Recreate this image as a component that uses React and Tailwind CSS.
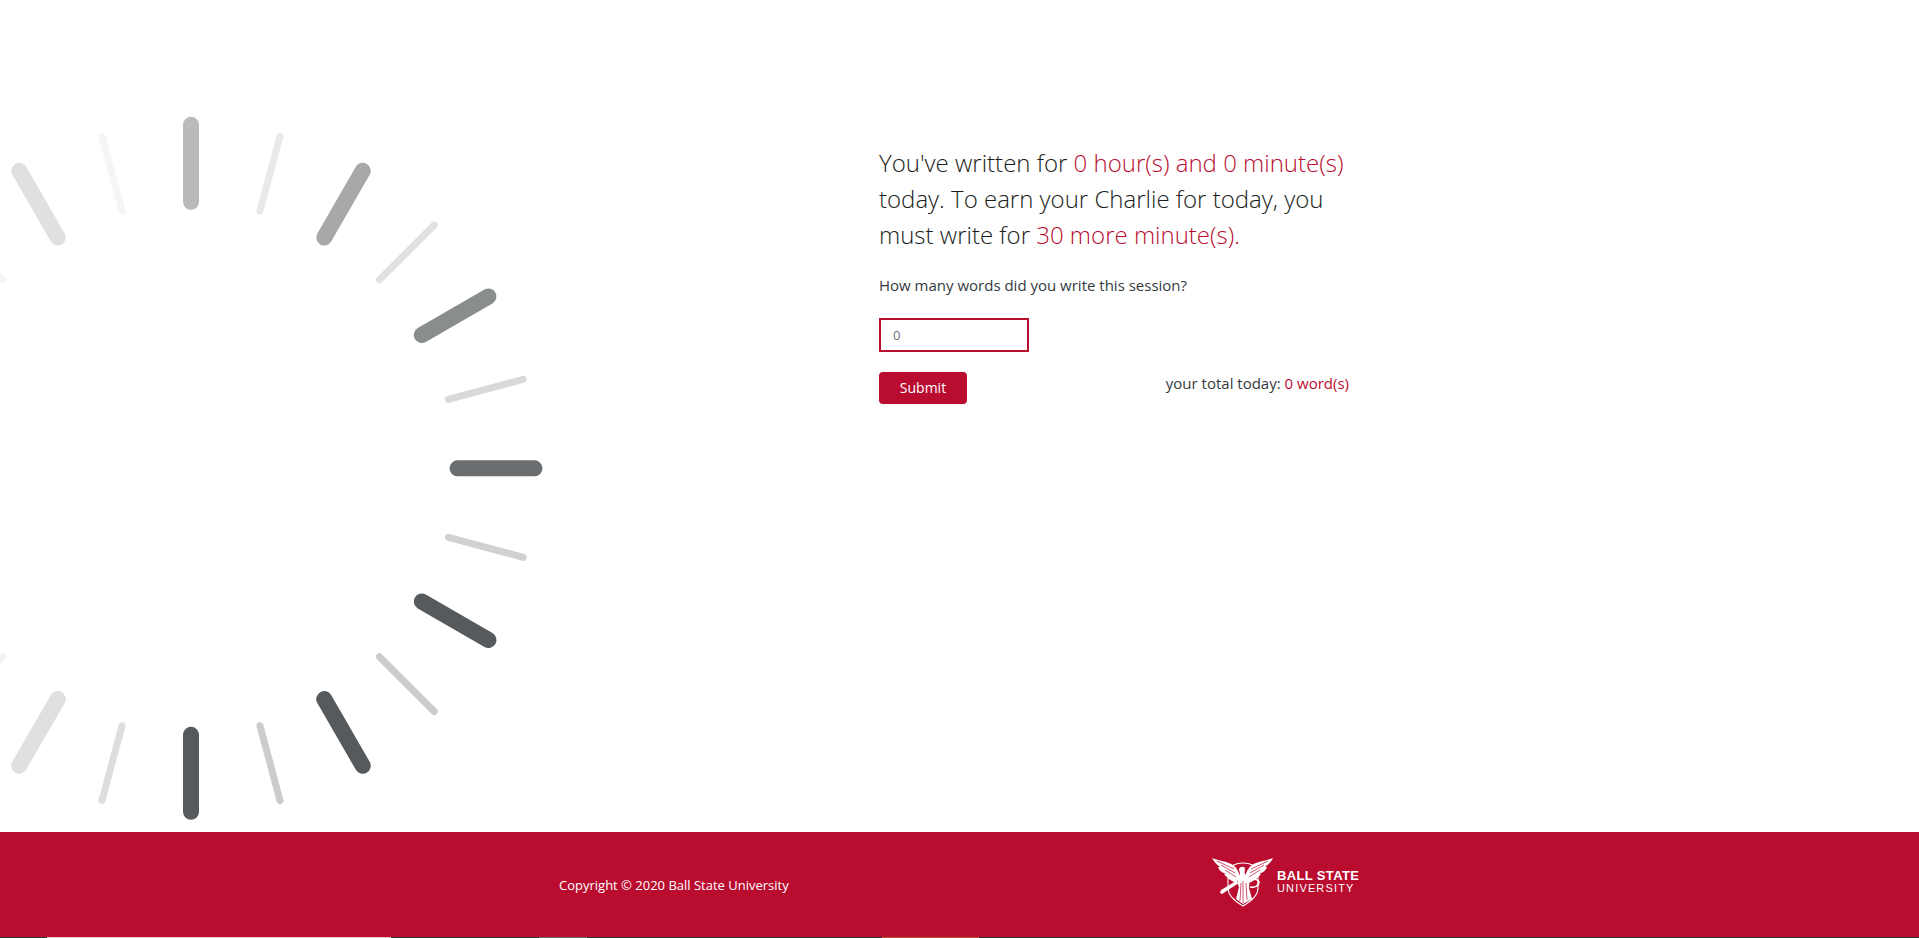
const CX = 191;
const CY = 468.3;

const SPOKES = [
  [0, 1, "#b9bbba"],
  [15, 0, "#e8e9e9"],
  [30, 1, "#a6a8a9"],
  [45, 0, "#e0e2e1"],
  [60, 1, "#8a8d8e"],
  [75, 0, "#d8dad9"],
  [90, 1, "#6b6e70"],
  [105, 0, "#d0d2d1"],
  [120, 1, "#575a5c"],
  [135, 0, "#cbcdcc"],
  [150, 1, "#565a5c"],
  [165, 0, "#cbcdcc"],
  [180, 1, "#565a5d"],
  [195, 0, "#dddfde"],
  [210, 1, "#dfe0e0"],
  [225, 0, "#f3f3f3"],
  [315, 0, "#f5f5f5"],
  [330, 1, "#dfe0e0"],
  [345, 0, "#f5f5f5"],
];

function Spinner() {
  return (
    <svg width="560" height="832" viewBox="0 0 560 832" className="block">
      {SPOKES.map(([deg, thick, color]) => {
        const a = (deg * Math.PI) / 180;
        const r1 = 266.5;
        const r2 = thick ? 343.5 : 344;
        return (
          <line
            key={deg}
            x1={CX + r1 * Math.sin(a)}
            y1={CY - r1 * Math.cos(a)}
            x2={CX + r2 * Math.sin(a)}
            y2={CY - r2 * Math.cos(a)}
            stroke={color}
            strokeWidth={thick ? 16 : 7}
            strokeLinecap="round"
          />
        );
      })}
    </svg>
  );
}

function Logo() {
  return (
    <svg width="62" height="50" viewBox="0 0 62 50" className="block">
      <path
        d="M16 20 L16 31 C16 39 24 45 31 49 C38 45 46 39 46 31 L46 20 M20 9 C26 5 36 5 42 9"
        fill="none"
        stroke="#fff"
        strokeWidth="1.1"
      />
      <g fill="#fff">
        <path d="M0 1 C7 4 15 4 21 8 C25 11 27 15 28 20 L24 26 C19 24 15 21 12 17 L14 17 C9 15 7 13 6 10 L8 10 C5 8 2 5 0 1Z" />
        <path d="M61 1 C54 4 46 4 40 8 C36 11 34 15 33 20 L37 26 C42 24 46 21 49 17 L47 17 C52 15 54 13 55 10 L53 10 C56 8 59 5 61 1Z" />
        <path d="M27 12 C28 9 33 9 33 12 C33 14 32 15 33 17 C37 20 38 26 37 31 L40 42 L31 47 L24 42 L27 30 C25 26 25 21 28 17 C28 15 27 14 27 12Z" />
        <path d="M8 36 L9 33 L24 24 L27 26 L13 35 L10 37Z" />
      </g>
      <path d="M37 23 C41 21 46 22 47 25 C47 29 42 31 38 30" fill="none" stroke="#fff" strokeWidth="1.6" />
      <g stroke="#ba0c2f" strokeWidth="0.7" fill="none">
        <path d="M5 4 L22 12 M9 8 L23 16 M13 13 L24 20" />
        <path d="M56 4 L39 12 M52 8 L38 16 M48 13 L37 20" />
        <path d="M29 26 L28 44 M31 24 L31 46 M34 26 L35 43" />
      </g>
    </svg>
  );
}

export default function App() {
  return (
    <div className="h-[938px] overflow-hidden bg-white font-['Open_Sans',sans-serif] flex flex-col">
      <main className="h-[832px] flex">
        <div className="w-[879px] overflow-hidden">
          <Spinner />
        </div>
        <div className="w-[470px] pt-[145px]">
          <p className="text-2xl leading-9 font-light text-[#1a1d20]">
            You've written for <span className="text-[#ba0c2f]">0 hour(s) and 0 minute(s)</span> today. To earn your Charlie for today, you must write for{" "}
            <span className="text-[#ba0c2f]">30 more minute(s).</span>
          </p>
          <p className="mt-[21px] text-[15px] leading-[23px] text-[#343a40]">How many words did you write this session?</p>
          <input
            readOnly
            placeholder="0"
            className="mt-[21px] block w-[150px] h-[34px] border-2 border-[#ba0c2f] px-[12px] text-[13px] text-[#495057] placeholder:text-[#6c757d] outline-none"
          />
          <div className="mt-[20px] flex items-start justify-between">
            <button className="w-[88px] h-[32px] rounded bg-[#ba0c2f] text-sm text-white">Submit</button>
            <p className="text-[15px] leading-[23px] text-[#343a40]">
              your total today: <span className="text-[#ba0c2f]">0 word(s)</span>
            </p>
          </div>
        </div>
      </main>
      <footer className="relative h-[106px] bg-[#ba0c2f] flex text-white">
        <div className="w-[559px]" />
        <p className="w-[653px] pt-[44px] text-[13px] leading-[19px]">Copyright © 2020 Ball State University</p>
        <div className="flex items-start gap-[3px] pt-[25px]">
          <Logo />
          <div className="font-['Liberation_Sans',sans-serif] pt-[12px]">
            <div className="text-[13px] leading-[14px] font-bold tracking-[0.35px]">BALL STATE</div>
            <div className="text-[11px] leading-[11px] tracking-[1.15px]">UNIVERSITY</div>
          </div>
        </div>
        <div className="absolute left-0 right-0 bottom-0 h-px bg-[#2f3334] flex">
          <div className="ml-[47px] w-[344px] bg-[#e8c9cf]" />
          <div className="ml-[148px] w-[48px] bg-[#6b6e70]" />
          <div className="ml-[295px] w-[48px] bg-[#b8583f]" />
          <div className="w-[49px] bg-[#b8583f]" />
        </div>
      </footer>
    </div>
  );
}
